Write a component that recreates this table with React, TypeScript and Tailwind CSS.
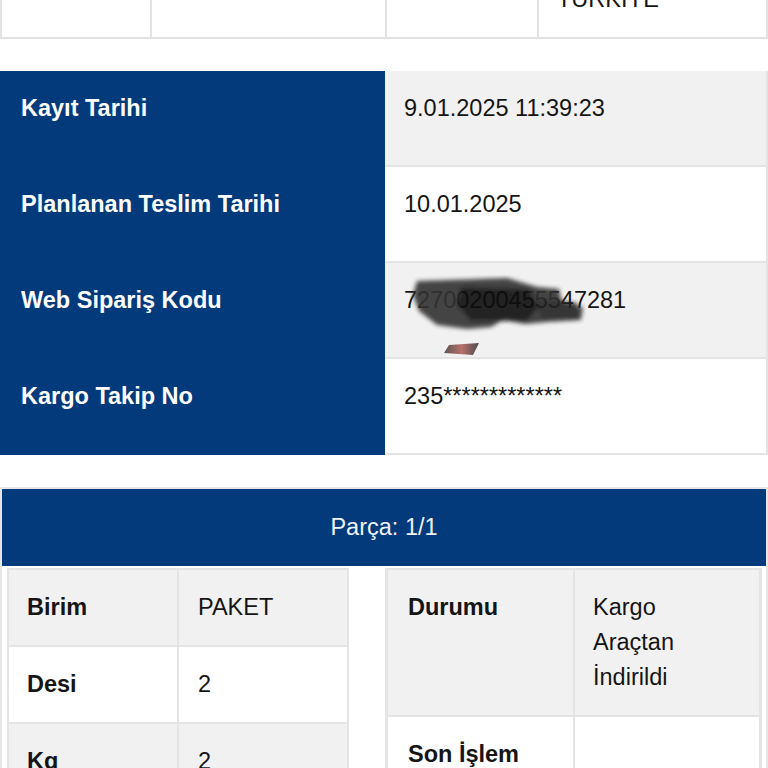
import React from "react";

const BLUE = "bg-[#023a7c]";

const orderRows = [
  { label: "Kayıt Tarihi", value: "9.01.2025 11:39:23", gray: true },
  { label: "Planlanan Teslim Tarihi", value: "10.01.2025", gray: false },
  { label: "Web Sipariş Kodu", value: "72700200455547281", gray: true, redacted: true },
  { label: "Kargo Takip No", value: "235*************", gray: false },
];

const leftRows = [
  { k: "Birim", v: "PAKET", gray: true },
  { k: "Desi", v: "2", gray: false },
  { k: "Kg", v: "2", gray: true },
];

function Redaction() {
  return (
    <svg
      className="pointer-events-none absolute left-[22px] top-[12px]"
      width="190"
      height="95"
      viewBox="0 0 190 95"
    >
      <defs>
        <filter id="smudge" x="-10%" y="-20%" width="120%" height="140%">
          <feGaussianBlur stdDeviation="2" />
        </filter>
        <linearGradient id="chip" x1="0" y1="0" x2="1" y2="0">
          <stop offset="0" stopColor="#5b5552" />
          <stop offset="0.5" stopColor="#b8706a" />
          <stop offset="1" stopColor="#4e4c4c" />
        </linearGradient>
      </defs>
      <g filter="url(#smudge)" opacity="0.9">
        <path d="M10 6 L100 3 L130 12 L152 14 L154 24 L162 30 L176 32 L174 45 L140 47 L118 49 L96 45 L84 52 L60 54 L30 50 L12 36 L6 20 Z" fill="#333" />
        <path d="M54 12 L122 14 L132 32 L120 46 L64 46 L50 30 Z" fill="#111" />
        <path d="M130 24 L170 28 L172 44 L134 44 Z" fill="#222" />
      </g>
      <path d="M37 78 L42 70 L72 68 L66 80 Z" fill="url(#chip)" />
    </svg>
  );
}

export default function App() {
  return (
    <div className="w-[768px] overflow-hidden bg-white font-['Liberation_Sans',Arial,sans-serif] text-[23.5px] leading-[35px] text-[#151515]">
      {/* tail of the address table above */}
      <div className="flex h-[39px] overflow-hidden border-b-2 border-[#e2e2e2]">
        <div className="w-[150px] border-l-2 border-[#e2e2e2]" />
        <div className="w-[235px] border-l-2 border-[#e2e2e2]" />
        <div className="w-[152px] border-l-2 border-[#e2e2e2]" />
        <div className="flex w-[231px] flex-col justify-end border-x-2 border-[#e2e2e2] px-[18px] pb-[20px]">
          <span>TÜRKİYE</span>
        </div>
      </div>

      {/* order info */}
      <div className="mt-[32px] flex flex-col">
        {orderRows.map((row) => (
          <div key={row.label} className="flex h-[96px]">
            <div className={`${BLUE} w-[385px] px-[21px] pt-[20px] font-bold text-white`}>
              {row.label}
            </div>
            <div
              className={`relative w-[383px] border-b-2 border-r-2 border-[#e4e4e4] px-[19px] pt-[20px] ${
                row.gray ? "bg-[#f1f1f1]" : "bg-white"
              }`}
            >
              {row.value}
              {row.redacted && <Redaction />}
            </div>
          </div>
        ))}
      </div>

      {/* piece card */}
      <div className="mt-[32px] border-x-2 border-t-2 border-[#e6e6e6]">
        <div className={`${BLUE} flex h-[77px] items-center justify-center text-[#eef2f8]`}>
          Parça: 1/1
        </div>
        <div className="flex gap-[36px] px-[5px] pt-[2px]">
          <div className="w-[342px] shrink-0 border-x-2 border-t-2 border-[#e4e4e4]">
            {leftRows.map((r) => (
              <div
                key={r.k}
                className={`flex border-b-2 border-[#e4e4e4] ${r.gray ? "bg-[#f1f1f1]" : "bg-white"}`}
              >
                <div className="w-[170px] border-r-2 border-[#e4e4e4] px-[18px] py-[20px] font-bold">
                  {r.k}
                </div>
                <div className="flex-1 px-[19px] py-[20px]">{r.v}</div>
              </div>
            ))}
          </div>
          <div className="w-[377px] shrink-0 border-x-[3px] border-t-2 border-[#e4e4e4]">
            <div className="flex border-b-2 border-[#e4e4e4] bg-[#f1f1f1]">
              <div className="w-[187px] border-r-2 border-[#e4e4e4] px-[20px] py-[20px] font-bold">
                Durumu
              </div>
              <div className="w-[150px] px-[18px] py-[20px]">Kargo Araçtan İndirildi</div>
            </div>
            <div className="flex bg-white">
              <div className="w-[187px] border-r-2 border-[#e4e4e4] px-[20px] py-[20px] font-bold">
                Son İşlem Tarihi
              </div>
              <div className="flex-1 px-[18px] py-[20px]" />
            </div>
          </div>
        </div>
      </div>
    </div>
  );
}
